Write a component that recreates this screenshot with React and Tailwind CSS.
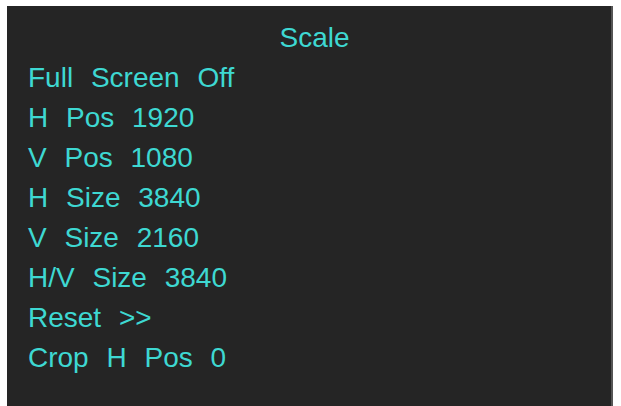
import React from "react";

const rows = [
  "Full Screen Off",
  "H Pos 1920",
  "V Pos 1080",
  "H Size 3840",
  "V Size 2160",
  "H/V Size 3840",
  "Reset >>",
  "Crop H Pos 0",
];

const App = () => {
  return (
    <div className="w-[621px] h-[406px] bg-white pl-[7px] pt-[6px] pr-[8px] overflow-hidden">
      {/* PANEL */}
      <div
        className="h-[420px] bg-[#252525] border-r-2 border-[#555] pt-[12px] pl-[21px] text-[#3ed8d2] text-[28px] leading-[40px] [word-spacing:10px]"
        style={{ fontFamily: '"Liberation Sans", Arial, sans-serif' }}
      >
        <div className="text-center pl-[10px] pr-[20px]">Scale</div>

        {rows.map((r) => (
          <div key={r}>{r}</div>
        ))}
      </div>
    </div>
  );
};

export default App;
